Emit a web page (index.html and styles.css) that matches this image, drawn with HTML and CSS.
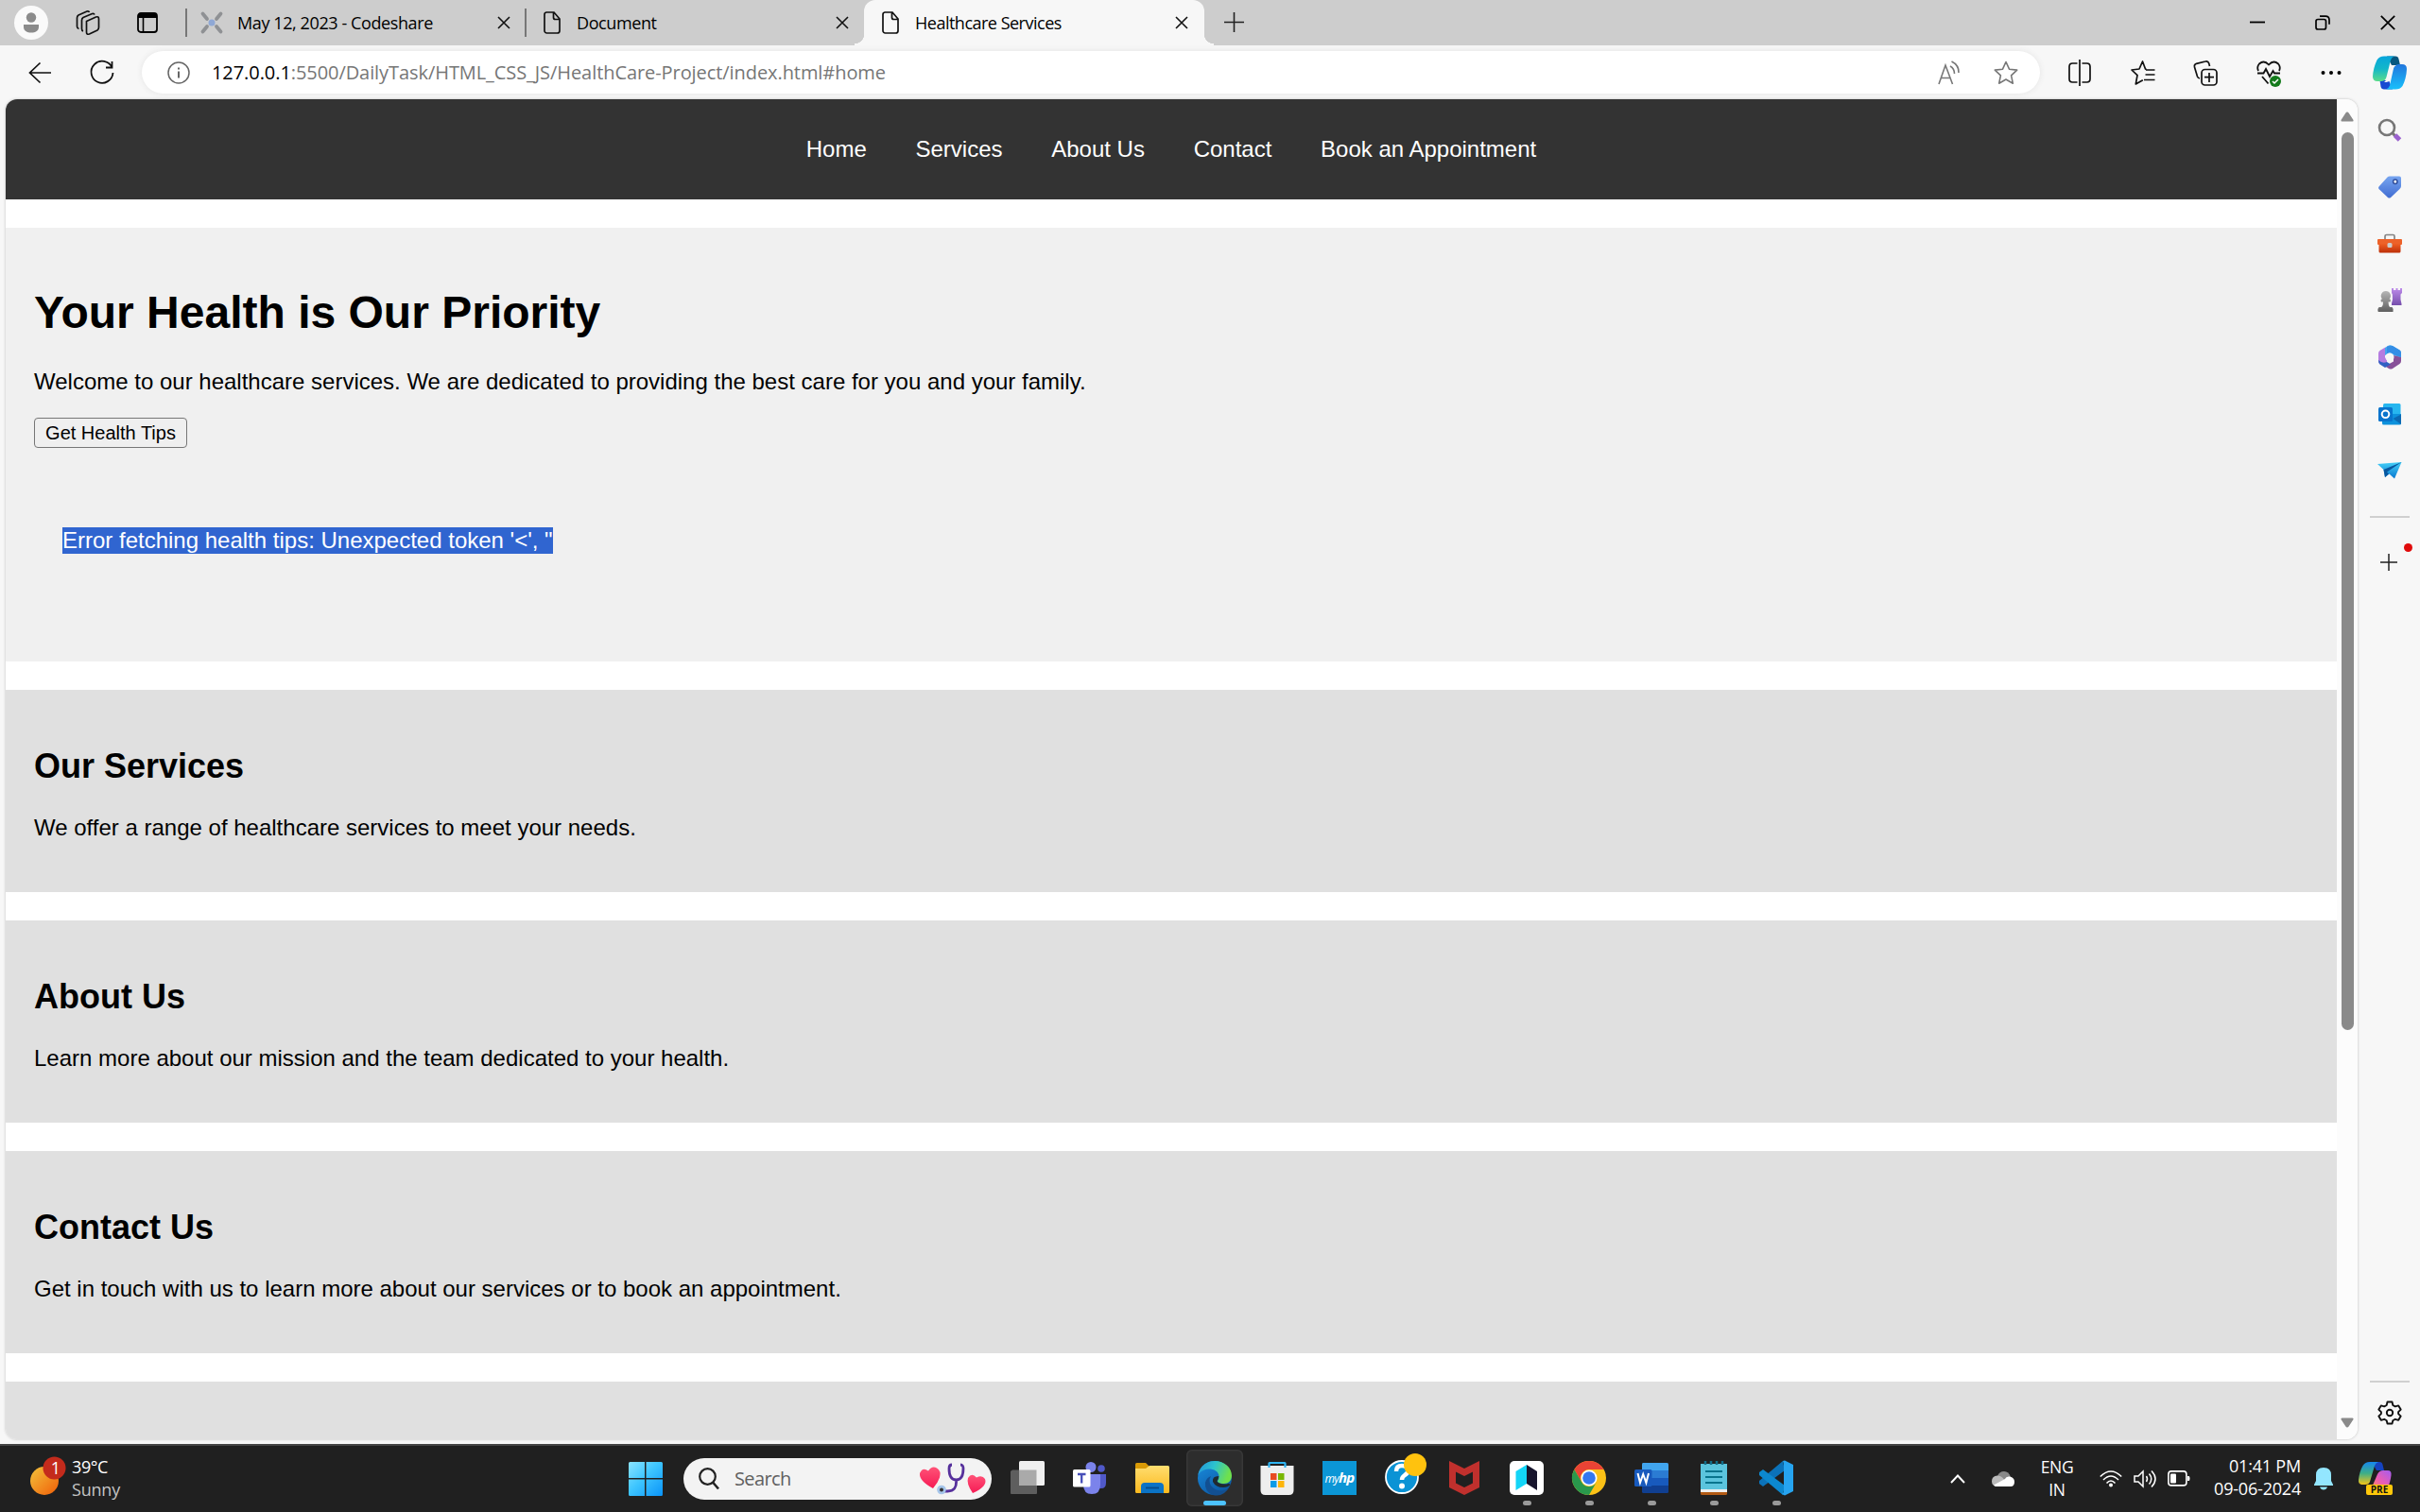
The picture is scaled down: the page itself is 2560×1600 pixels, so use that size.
FILE: index.html
```html
<!DOCTYPE html>
<html lang="en">
<head>
<meta charset="utf-8">
<title>Healthcare Services</title>
<link rel="stylesheet" href="styles.css">
</head>
<body>
<svg class="defs" width="0" height="0">
  <defs>
    <symbol id="doc" viewBox="0 0 18 24"><path d="M3 1h8l6 7v12.500a2.500 2.500 0 0 1-2.500 2.500h-11a2.500 2.500 0 0 1-2.500-2.500v-17a2.500 2.500 0 0 1 2-2.500zM10.500 1v5.500a2 2 0 0 0 2 2H17" fill="none" stroke="#111" stroke-width="1.700"/></symbol>
    <symbol id="x" viewBox="0 0 14 14"><path d="M1 1l12 12M13 1L1 13" fill="none" stroke="#111" stroke-width="1.600"/></symbol>
    <linearGradient id="gWin" x1="0" y1="0" x2="1" y2="1"><stop offset="0" stop-color="#8be3ff"/><stop offset=".45" stop-color="#3fc6ff"/><stop offset="1" stop-color="#0a94f8"/></linearGradient>
    <linearGradient id="gSun" x1="0" y1="0" x2="1" y2="1"><stop offset="0" stop-color="#f3c33c"/><stop offset="1" stop-color="#f05e08"/></linearGradient>
    <linearGradient id="gCopA" x1="0" y1="0" x2="0" y2="1"><stop offset="0" stop-color="#08a5dc"/><stop offset=".5" stop-color="#13b7c9"/><stop offset="1" stop-color="#5bdc8a"/></linearGradient>
    <linearGradient id="gCopB" x1="0" y1="0" x2="0" y2="1"><stop offset="0" stop-color="#2176dd"/><stop offset="1" stop-color="#18c0fb"/></linearGradient>
    <linearGradient id="gPreA" x1="0" y1="0" x2="0" y2="1"><stop offset="0" stop-color="#1687ee"/><stop offset=".5" stop-color="#3dae87"/><stop offset="1" stop-color="#f5c518"/></linearGradient>
    <linearGradient id="gPreB" x1="1" y1="0" x2="0" y2="1"><stop offset="0" stop-color="#a45cf0"/><stop offset=".6" stop-color="#ee5db0"/><stop offset="1" stop-color="#f98c5c"/></linearGradient>
    <linearGradient id="gTag" x1="0" y1="0" x2="0" y2="1"><stop offset="0" stop-color="#77a5f0"/><stop offset="1" stop-color="#416dd2"/></linearGradient>
    <linearGradient id="gBox" x1="0" y1="0" x2="0" y2="1"><stop offset="0" stop-color="#ef5f24"/><stop offset="1" stop-color="#bd2f08"/></linearGradient>
    <linearGradient id="gPurple" x1="0" y1="0" x2="0" y2="1"><stop offset="0" stop-color="#bd8bea"/><stop offset="1" stop-color="#764fac"/></linearGradient>
    <linearGradient id="gGrey" x1="0" y1="0" x2="0" y2="1"><stop offset="0" stop-color="#b6b6b6"/><stop offset="1" stop-color="#5f5f5f"/></linearGradient>
    <linearGradient id="gPlane" x1="0" y1="0" x2="0" y2="1"><stop offset="0" stop-color="#45d0f8"/><stop offset="1" stop-color="#0877cf"/></linearGradient>
    <linearGradient id="gFold" x1="0" y1="0" x2="0" y2="1"><stop offset="0" stop-color="#ffde70"/><stop offset="1" stop-color="#fbb91e"/></linearGradient>
    <linearGradient id="gEdge" x1="0" y1="0" x2="1" y2=".3"><stop offset="0" stop-color="#2390d8"/><stop offset=".5" stop-color="#2cc3cf"/><stop offset="1" stop-color="#6fe04c"/></linearGradient>
    <linearGradient id="gEdgeB" x1="0" y1="0" x2=".6" y2="1"><stop offset="0" stop-color="#1a8ee0"/><stop offset="1" stop-color="#0c59a4"/></linearGradient>
    <linearGradient id="gHeart" x1="0" y1="0" x2="0" y2="1"><stop offset="0" stop-color="#ff5277"/><stop offset="1" stop-color="#f61b55"/></linearGradient>
  </defs>
</svg>

<div class="screen">
  <header class="tabbar">
    <div class="tools">
      <svg class="avatar" viewBox="0 0 36 36"><circle cx="18" cy="18" r="18" fill="#fafafa"/><circle cx="18" cy="12.500" r="5.200" fill="#8b8b8b"/><path d="M10 20h16v2.500c0 4-3.500 6-8 6s-8-2-8-6z" fill="#8b8b8b"/></svg>
      <svg class="spaces" viewBox="0 0 26 26" fill="none" stroke="#111" stroke-width="1.700" stroke-linejoin="round"><path d="M11.500 11.500l10-4.500q3-1 3 2v9q0 2-1.500 3l-8.500 4q-3 1-3-2z"/><path d="M8 22q-1.500-.5-1.500-2.500V10.500q0-2 1.500-3l9.500-4q2-.5 2.500 1"/><path d="M3.500 19.500Q1.500 19 1.500 17V8q0-2 1.500-3l9-4q2-.5 2.500 1"/></svg>
      <svg class="panes" viewBox="0 0 22 22"><rect x="1" y="1" width="20" height="20" rx="3" fill="none" stroke="#000" stroke-width="1.800"/><path d="M1 6V4q0-3 3-3h14q3 0 3 3v2z" fill="#000"/><path d="M6.500 6v15" stroke="#000" stroke-width="1.600"/></svg>
    </div>
    <div class="tab first">
      <svg class="fav" viewBox="0 0 24 24"><path d="M2.500 2.500l4.500 5.500M21.500 2.500l-4.500 5.500M2.500 21.500l4.500-5.500M21.500 21.500l-4.500-5.500" stroke="#8f9194" stroke-width="3.800" stroke-linecap="round"/><circle cx="12" cy="12" r="3.500" fill="#8fa8d5"/></svg>
      <span class="title t1">May 12, 2023 - Codeshare</span><svg class="x"><use href="#x"/></svg>
    </div>
    <div class="tab second"><svg class="doc"><use href="#doc"/></svg><span class="title t2">Document</span><svg class="x"><use href="#x"/></svg></div>
    <div class="tab active"><svg class="doc"><use href="#doc"/></svg><span class="title t3">Healthcare Services</span><svg class="x"><use href="#x"/></svg></div>
    <svg class="plus" viewBox="0 0 21 21"><path d="M10.500 0v21M0 10.500h21" stroke="#222" stroke-width="1.600"/></svg>
    <div class="winctl">
      <svg viewBox="0 0 16 16"><path d="M0 7.500h16" stroke="#000" stroke-width="1.800"/></svg>
      <svg viewBox="0 0 16 16" fill="none" stroke="#000" stroke-width="1.700"><rect x="1" y="4.500" width="10.500" height="10.500" rx="2"/><path d="M5 1.200h6q4 0 4 4v4.500"/></svg>
      <svg viewBox="0 0 16 16"><path d="M.8.800l14.400 14.400M15.200.8L.8 15.200" stroke="#000" stroke-width="1.700"/></svg>
    </div>
  </header>

  <div class="toolbar">
    <svg class="back" viewBox="0 0 24 24" fill="none" stroke="#111" stroke-width="1.700"><path d="M12.500 1.500L1.500 12l11 10.500M1.500 12H24"/></svg>
    <svg class="reload" viewBox="0 0 26 26" fill="none" stroke="#111" stroke-width="1.800"><path d="M23.500 7.500A11.500 11.500 0 1 0 24.500 13M23.500 1v6.500H17"/></svg>
    <div class="address">
      <svg class="info" viewBox="0 0 24 24" fill="none" stroke="#666" stroke-width="1.500"><circle cx="12" cy="12" r="11"/><path d="M12 10.500V17.500M12 6.500v2" stroke-width="2"/></svg>
      <span class="url"><b>127.0.0.1</b>:5500/DailyTask/HTML_CSS_JS/HealthCare-Project/index.html#home</span>
      <svg class="read" viewBox="0 0 24 24" fill="none" stroke="#777" stroke-width="1.600"><path d="M1 24L8 4l7.500 20M3.500 17.500h9.500M13 5q4.500 2.500 4.500 8M14.500 0q8 4 7.500 12"/></svg>
      <svg class="star" viewBox="0 0 26 26"><path d="M13 1.500l3.500 7.700 8.200.900-6.100 5.700 1.700 8.400L13 20l-7.300 4.200 1.700-8.400L1.300 10.100l8.200-.9z" fill="none" stroke="#777" stroke-width="1.600" stroke-linejoin="round"/></svg>
    </div>
    <div class="actions">
      <svg viewBox="0 0 26 28" fill="none" stroke="#111" stroke-width="1.700"><path d="M10.500 4H5.500q-3.500 0-3.500 3.500v13q0 3.500 3.500 3.500h5M15.500 4h5q3.500 0 3.500 3.500v13q0 3.500-3.500 3.500h-5M13 0v28"/></svg>
      <svg viewBox="0 0 26 28" fill="none" stroke="#111" stroke-width="1.700" stroke-linejoin="round"><path d="M16.500 10.500l-1-.5L12.500 2 9 10l-8 1 6 5.700L5.300 26l7.500-4.300M16 11h9.500M15.500 16h10M14 21.500h11.500"/></svg>
      <svg viewBox="0 0 26 28" fill="none" stroke="#111" stroke-width="1.700"><rect x="9" y="10.500" width="16" height="16.500" rx="3.500"/><path d="M17 14v10M12 18.700h10M17.500 7l-.8-3q-.9-2.800-3.700-2L3.500 4.300q-2.700.8-2 3.700l3 10q.5 1.500 2.500 2"/></svg>
      <svg viewBox="0 0 26 28" fill="none" stroke="#111" stroke-width="1.800"><path d="M2 12Q0 8 3 4.500q5-4.500 10 1 5-5.500 10-1Q26 8 24 12M1 14.500h6.500L10 10l4 8 3.500-6 1.500 2.500h6M6 18l6.500 7.500"/><circle cx="20" cy="23" r="6" fill="#137a1b" stroke="none"/><path d="M17 23l2 2 4-4" stroke="#fff" stroke-width="1.500"/></svg>
      <svg viewBox="0 0 26 28"><circle cx="4.500" cy="14" r="2"/><circle cx="13" cy="14" r="2"/><circle cx="21.500" cy="14" r="2"/></svg>
    </div>
    <svg class="copilot" viewBox="0 0 36 36"><path d="M15 .5h9q3 0 3.500 3L29 10h-9z" fill="#07577f"/><path d="M21 35.500h-9q-3 0-3.500-3L7.500 26H17z" fill="#1749d2"/><path d="M12 .5h11q-3 1-4 4l-4.500 18q-1 4-5 4.500H5q-5 0-5-5Q.5 13 4.500 4.500 7 .5 12 .5z" fill="url(#gCopA)"/><path d="M24 35.500H14q3-1 4-4l4-18q1-4 5-4.500h4q5 0 5 5-.5 10-4.500 18-2.500 3.500-7.500 3.500z" fill="url(#gCopB)"/><path d="M19.500 10H25q-3 1-4 5l-3 11q-1 2-6 2 2.500-1.500 3.500-5z" fill="#f7f7f7"/></svg>
  </div>

  <div class="middle">
    <div class="frame">
      <main class="page">
        <nav><a>Home</a><a>Services</a><a>About Us</a><a>Contact</a><a>Book an Appointment</a></nav>
        <section class="hero">
          <h1>Your Health is Our Priority</h1>
          <p>Welcome to our healthcare services. We are dedicated to providing the best care for you and your family.</p>
          <button>Get Health Tips</button>
          <div class="tips"><p><mark>Error fetching health tips: Unexpected token '&lt;', "</mark></p></div>
        </section>
        <section><h2>Our Services</h2><p>We offer a range of healthcare services to meet your needs.</p></section>
        <section><h2>About Us</h2><p>Learn more about our mission and the team dedicated to your health.</p></section>
        <section><h2>Contact Us</h2><p>Get in touch with us to learn more about our services or to book an appointment.</p></section>
        <section></section>
      </main>
      <div class="scroll">
        <svg viewBox="0 0 14 11"><path d="M7 .5q1 0 1.600 1L13.500 9q.5 1.500-1 1.500h-11Q0 10.500.5 9l4.900-7.500Q6 .5 7 .5z" fill="#8a8a8a"/></svg>
        <div class="thumb"></div>
        <svg class="down" viewBox="0 0 14 11"><path d="M7 .5q1 0 1.600 1L13.500 9q.5 1.500-1 1.500h-11Q0 10.500.5 9l4.900-7.500Q6 .5 7 .5z" fill="#8a8a8a"/></svg>
      </div>
    </div>
    <aside class="side">
      <svg viewBox="0 0 26 26"><circle cx="10" cy="10" r="8" fill="none" stroke="#777" stroke-width="2.600"/><path d="M15.500 15.500l3 3" stroke="#777" stroke-width="3"/><path d="M18.500 18l5 5" stroke="#9b62cf" stroke-width="5"/></svg>
      <svg viewBox="0 0 26 26"><path d="M13 1.500h10q2 0 2 2V12q0 1.500-1.500 3L14 24q-1.500 1-3 0L1.500 15q-1-1.500 0-2.500l9-10q1-1 2.500-1z" fill="url(#gTag)"/><circle cx="18.800" cy="7.300" r="2.200" fill="#fff" stroke="#304f9d" stroke-width="1.500"/></svg>
      <svg viewBox="0 0 26 26"><path d="M8 8V5q0-1.500 1.500-1.500h7q1.500 0 1.500 1.500v3" fill="none" stroke="#858585" stroke-width="1.700"/><rect y="8" width="26" height="6" rx="1" fill="#ed6229"/><path d="M1.500 13h23v8q0 1.500-1.500 1.500H3q-1.500 0-1.500-1.500z" fill="url(#gBox)"/><rect x="10.500" y="12" width="5" height="5" rx="1.500" fill="#ccc"/></svg>
      <svg viewBox="0 0 26 26"><path d="M15 0h2v2h2.500V0h2v2H24V0h2v5l-1.500 1.500q-.5 6 1 10V18H15v-2q1.500-4 .8-9.500L15 5z" fill="url(#gPurple)"/><path d="M9 3a5 5 0 0 1 3.500 8.500h1q1 1.500 0 3h-2q0 3.500 1.500 5.500h2.500q2 2 1 5H.8q-1.300-3 1-5h2.500q2-2 1.700-5.500H4q-1-1.500 0-3h1.200A5 5 0 0 1 9 3z" fill="url(#gGrey)"/></svg>
      <svg viewBox="0 0 26 26"><path d="M12 .5q2-.8 4 .4l7.500 4.500q1.500 1 1.500 3v5L17 11l-4-2.500L8 11V3z" fill="#43a6ee"/><path d="M25 13v4q0 2-1.500 3L16 25q-2 1.200-4 0l-4-2.500 9-5V11z" fill="#885099"/><path d="M10 1.500L2.500 6Q1 7 1 9v8q0 2 1.500 3L8 22.500l2-4V16L8 13V3z" fill="#b57ce0"/><path d="M1 16q4 4 9 2l4 2.500L8 24l-5.500-3.500Q1 19 1 16z" fill="#3260c2"/><path d="M10 1.500v8L13 8l9 4 3 1V8q0-1.500-1.500-2.500L16 1z" fill="#348ee6"/><circle cx="13" cy="13" r="4.500" fill="#f7f7f7"/></svg>
      <svg viewBox="0 0 26 26"><rect x="6" y="2" width="18.500" height="15" rx="1.500" fill="#27b6ef"/><path d="M5 13h20v10q0 1.500-1.500 1.500H6.500Q5 24.500 5 23z" fill="#0d91dc"/><path d="M25 13.500L16.500 18l8.500 6z" fill="#0b69b3"/><rect x="1" y="6" width="15" height="15" rx="1.500" fill="#0874cd"/><circle cx="8.500" cy="13.300" r="3.800" fill="none" stroke="#fff" stroke-width="2"/></svg>
      <svg viewBox="0 0 26 26"><path d="M0 6l25.500-2L18 21.500l-5.500-5L8 20l-1.500-8z" fill="url(#gPlane)"/><path d="M25.500 4L6.500 12 8 20l4-3.500-2-2z" fill="#08579f"/></svg>
      <hr>
      <div class="add"><svg viewBox="0 0 18 18"><path d="M9 0v18M0 9h18" stroke="#222" stroke-width="1.500"/></svg><i></i></div>
      <hr class="low">
      <svg class="gear" viewBox="0 0 26 26" fill="none" stroke="#111" stroke-width="1.900" stroke-linejoin="round"><path d="M10.500 1.500h5l.8 3.500 2.500 1.400 3.400-1 2.500 4.200-2.600 2.500v2l2.600 2.500-2.500 4.200-3.400-1-2.500 1.500-.8 3.200h-5l-.8-3.200-2.500-1.500-3.400 1-2.500-4.200 2.600-2.500v-2L1.300 9.600l2.500-4.200 3.400 1L9.700 5z"/><circle cx="13" cy="13" r="3.200"/></svg>
    </aside>
  </div>

  <footer class="taskbar">
    <div class="weather">
      <svg viewBox="0 0 40 44"><circle cx="15" cy="27" r="15" fill="url(#gSun)"/><circle cx="25.500" cy="13.500" r="12" fill="#c42b1c"/><text x="27" y="20" text-anchor="middle" font-size="18" fill="#fff">1</text></svg>
      <div><span>39°C</span><em>Sunny</em></div>
    </div>
    <svg class="start" viewBox="0 0 36 36"><path d="M1.500 0H17v17H0V1.500Q0 0 1.500 0zM18.500 0H34.500Q36 0 36 1.500V17H18.500zM0 18.500h17V36H1.500Q0 36 0 34.500zM18.500 18.500H36v16q0 1.500-1.500 1.500h-16z" fill="url(#gWin)"/></svg>
    <div class="search">
      <svg class="mag" viewBox="0 0 22 24"><circle cx="9.500" cy="9.500" r="8.300" fill="none" stroke="#222" stroke-width="2.200"/><path d="M15 15.500l6 7" stroke="#222" stroke-width="2.600"/></svg>
      <span>Search</span>
      <svg class="med" viewBox="0 0 72 34"><path d="M15 27Q0 19 1 11q3-7 9-2.500 4-6 9-3 5 3 3 10-2 6-7 11.500z" fill="url(#gHeart)"/><path d="M57 32Q50 22 52 16q4-6 9-.5 6-3 9 1.500 3 8-13 15z" fill="url(#gHeart)"/><path d="M35 2q-3 0-3 4 0 12 7.500 12T47 6q0-4-3-4M39.500 18q1 12-9 12h-6" fill="none" stroke="#56309c" stroke-width="2.800"/><circle cx="24" cy="28.500" r="4.800" fill="#a5c5ea"/><circle cx="24" cy="28.500" r="2" fill="#333"/></svg>
    </div>
    <div class="apps">
      <div class="app"><svg viewBox="0 0 36 36"><path d="M2 9.500h26V34q0 1-1 1H1q-1 0-1-1V11z" fill="#5e5e5e"/><rect x="9" width="27" height="26" rx="1.500" fill="#f0f0f0"/><path d="M9 9.500h18.500V26H10.500Q9 26 9 24.500z" fill="#aaa"/></svg></div>
      <div class="app"><svg viewBox="0 0 36 36"><circle cx="19" cy="6.500" r="5.500" fill="#7b83eb"/><circle cx="30" cy="8" r="3.800" fill="#5059c9"/><path d="M24 14h11v9q0 6-5 6-6 0-6-6z" fill="#5059c9"/><path d="M11 14h18v11q0 10-9 10t-9-10z" fill="#7b83eb"/><rect y="9" width="18.500" height="18.500" rx="1.500" fill="#fff"/><path d="M5 14h8.500M9.200 14v9.500" stroke="#464eb8" stroke-width="2.300"/></svg></div>
      <div class="app"><svg viewBox="0 0 36 36"><path d="M0 3.500Q0 2 1.500 2H11l4 4-2 4H0z" fill="#d99a06"/><path d="M0 8h11l4-3h19.500Q36 5 36 6.500v26q0 1.500-1.500 1.500h-33Q0 34 0 32.500z" fill="url(#gFold)"/><path d="M6 34v-7q0-4 4-4h16q4 0 4 4v7z" fill="#0b73c5"/><path d="M11 28.500h14" stroke="#064b8a" stroke-width="1.800"/></svg></div>
      <div class="app on"><svg viewBox="0 0 36 36"><circle cx="18" cy="18" r="18" fill="url(#gEdgeB)"/><path d="M.3 15C2 6 9 0 18 0c10 0 18 7 18 15.500 0 5-3.500 8.500-8.500 8.500-4 0-6.500-1.500-6.500-2.500s1.500-2 1.500-5C22.500 11 17 8.500 12 8.500 6 8.500 2 12 .3 15z" fill="url(#gEdge)"/><path d="M14 16q-3 5 0 10 5 7 14 5 4-1 6-4-7 12-18 9Q7 32 8 23q1-5 6-7z" fill="#124f91"/><path d="M22.300 16q-.3 3-1.500 4.500-1 1.500 2 3 5 2 10 .2l2 1.300Q32 28 27 28q-8 0-11-6-1-6 6.300-6z" fill="#202a30"/></svg></div>
      <div class="app"><svg viewBox="0 0 36 36"><path d="M.5 5h35v26q0 5-5 5h-25q-5 0-5-5z" fill="#eee"/><path d="M9.500 7V2.500Q9.500 2 10 2h16q.5 0 .5.500V7" fill="none" stroke="#30b5f2" stroke-width="2.200"/><path fill="#e84a21" d="M11 13h6.500v7H11z"/><path fill="#78b700" d="M19 13h6.500v7H19z"/><path fill="#0a9be8" d="M11 21h6.500v7H11z"/><path fill="#fdb509" d="M19 21h6.500v7H19z"/></svg></div>
      <div class="app"><div class="hp">my<b>hp</b></div></div>
      <div class="app"><svg class="help" viewBox="0 0 48 48"><circle cx="20" cy="28" r="17" fill="#0b93d5" stroke="#fff" stroke-width="1.800"/><path d="M14 22q0-6 6-6 6.500 0 6.500 5 0 3-3.500 5-3 2-3 5" fill="none" stroke="#fff" stroke-width="4.500"/><circle cx="20" cy="37.500" r="3" fill="#fff"/><circle cx="34" cy="15" r="12" fill="#ffc20e"/></svg></div>
      <div class="app"><svg viewBox="0 0 36 36"><path d="M2 0l16 8L34 0v28l-16 8-16-8zM9 11.500v12L18 28l9-4.500v-12L18 16z" fill="#c0302d" fill-rule="evenodd"/></svg></div>
      <div class="app run"><svg viewBox="0 0 36 36"><rect width="36" height="36" rx="5" fill="#fff"/><path d="M6.500 11L18 4v20L6.500 31z" fill="#13d5f7"/><path d="M18 4l11 7v20l-11-7z" fill="#17152d"/></svg></div>
      <div class="app run"><svg viewBox="0 0 36 36"><circle cx="18" cy="18" r="18" fill="#fbc116"/><path d="M2.400 9a18 18 0 0 1 31.200 0H18a9 9 0 0 0-7.800 13.500z" fill="#ea4335"/><path d="M2.400 9A18 18 0 0 0 18 36l7.800-13.500a9 9 0 0 1-15.600 0z" fill="#29984c"/><circle cx="18" cy="18" r="8.500" fill="#fff"/><circle cx="18" cy="18" r="6.800" fill="#3478ee"/></svg></div>
      <div class="app run"><svg viewBox="0 0 36 36"><path d="M9 2h25.500Q36 2 36 3.500V10H8V3.500Q8 2 9 2z" fill="#41a5ee"/><path d="M8 10h28v8H8z" fill="#2b7cd3"/><path d="M8 18h28v8H8z" fill="#185abd"/><path d="M8 26h28v6.500q0 1.500-1.500 1.500h-25Q8 34 8 32.500z" fill="#103f91"/><rect y="9" width="18.500" height="18" rx="1.500" fill="#185abd"/><path d="M3.500 13l2.500 10 3.200-9 3.200 9L15 13" fill="none" stroke="#fff" stroke-width="2"/></svg></div>
      <div class="app run"><svg viewBox="0 0 36 36"><path d="M4 3h28v27H4z" fill="#5bc4dd"/><path d="M4 30h28v3H4z" fill="#eee"/><path d="M4 33h28v1.500q0 1.500-1.500 1.500h-25Q4 36 4 34.500z" fill="#b25a14"/><path d="M9 11h18M9 17h18M9 23h18" stroke="#07748d" stroke-width="2"/><path d="M9 0v4M15 0v4M21 0v4M27 0v4" stroke="#136d89" stroke-width="2.500"/></svg></div>
      <div class="app run"><svg viewBox="0 0 36 36"><path d="M25 0l2 10L4 27l-4-3v-3z" fill="#0b72b9"/><path d="M0 12l4-3 23 17-2 10L0 15z" fill="#0c88cf"/><path d="M25 0l2-.5L36 4v28l-9 4.500-3-1.500 2-2V3z" fill="#26a4f0"/></svg></div>
    </div>
    <div class="tray">
      <svg class="chev" viewBox="0 0 16 10"><path d="M1 9l7-7.500L15 9" fill="none" stroke="#fff" stroke-width="1.900"/></svg>
      <svg class="cloud" viewBox="0 0 24 16"><path d="M6 5q2-5 7-5 5 0 7 6l-8 4z" fill="#888"/><path d="M5 16q-5-1-5-5.500Q0 5 6 4.500q4 0 7 4l6 5z" fill="#bbb"/><path d="M2 14.500L14 8q1-3 5-2.500 5 1 5 5.500 0 5-4 5H5q-2 0-3-1.500z" fill="#fff"/></svg>
      <div class="lang">ENG<br>IN</div>
      <svg class="wifi" viewBox="0 0 24 18" fill="none" stroke="#fff" stroke-width="1.600"><path d="M.8 6.500q11.200-11 22.400 0M4 10q8-8 16 0M7.500 13.500q4.500-5 9 0"/><circle cx="12" cy="15.500" r="2" fill="#fff" stroke="none"/></svg>
      <svg class="vol" viewBox="0 0 25 20" fill="none" stroke="#fff" stroke-width="1.500"><path d="M1 7h4l5-5v16l-5-5H1zM13.500 7q2 3 0 6M16.500 4.500q4.500 5.500 0 11M19 1.500q8 8.500 0 17"/></svg>
      <svg class="bat" viewBox="0 0 24 17"><rect x=".9" y=".9" width="19" height="15" rx="3" fill="none" stroke="#fff" stroke-width="1.600"/><rect x="3" y="3.500" width="6" height="10" rx="1" fill="#fff"/><path d="M21 6h1.500q1 0 1 2.500t-1 2.500H21z" fill="#fff"/></svg>
      <div class="clock">01:41 PM<br>09-06-2024</div>
      <svg class="bell" viewBox="0 0 20 24"><path d="M10 0q8 0 8 8v6l2 4v1H0v-1l2-4V8q0-8 8-8zM6 20.500h8q-1 3-4 3t-4-3z" fill="#93e6ff"/></svg>
      <div class="pre"><svg viewBox="0 0 36 36"><path d="M14 0h8q3 0 3.500 3L27 9h-8z" fill="#1543c0"/><path d="M12 0h9q-3 1-4 4l-5 17q-1 3-5 3H3q-3.500-1-3-5Q1 10 4.500 4 7 0 12 0z" fill="url(#gPreA)"/><path d="M14 27l6-14q2-4 6-4h5q4 0 3.500 5-1 8-3.500 13z" fill="url(#gPreB)"/></svg><b>PRE</b></div>
    </div>
  </footer>
</div>
</body>
</html>
```
FILE: styles.css
```css
* { box-sizing: border-box; }
body { margin: 0; background: #f7f7f7; color: #000; font-family: "Liberation Sans", Arial, sans-serif; }
svg { display: block; flex: none; overflow: visible; }
.defs { position: absolute; }
.screen { width: 2560px; height: 1600px; display: flex; flex-direction: column; overflow: hidden; }
.tabbar, .toolbar, .taskbar { flex: none; display: flex; align-items: center; font-family: "Open Sans", "Noto Sans", sans-serif; white-space: nowrap; }

/* tab strip */
.tabbar { height: 48px; background: #cdcdcd; }
.tools { display: flex; align-items: center; width: 196px; padding-left: 15px; }
.avatar { width: 36px; height: 36px; }
.spaces { width: 26px; height: 26px; margin-left: 29px; }
.panes { width: 22px; height: 22px; margin-left: 39px; }
.tab { display: flex; align-items: center; height: 48px; font-size: 18px; }
.title { margin-top: -1px; }
.first { width: 359px; padding: 0 15px 0 14px; border-left: 2px solid #777; height: 30px; }
.second { width: 359px; padding: 0 16px 0 18px; border-left: 2px solid #777; height: 30px; }
.active { position: relative; width: 360px; padding: 0 17px 0 19px; background: #f7f7f7; border-radius: 12px 12px 0 0; }
.active::before, .active::after { content: ""; position: absolute; bottom: 0; width: 10px; height: 12px; }
.active::before { left: -10px; background: radial-gradient(circle at 0 0, #cdcdcd 10px, #f7f7f7 10.500px); }
.active::after { right: -10px; background: radial-gradient(circle at 100% 0, #cdcdcd 10px, #f7f7f7 10.500px); }
.fav { width: 24px; height: 24px; margin-right: 15px; }
.doc { width: 18px; height: 24px; margin-right: 17px; }
.x { width: 14px; height: 14px; margin-left: auto; }
.t1 { letter-spacing: -.4px; }
.t2 { letter-spacing: -.4px; }
.t3 { letter-spacing: -.5px; }
.plus { width: 21px; height: 21px; margin: -1px 0 0 21px; }
.winctl { display: flex; gap: 53px; margin: -1px 0 0 auto; padding-right: 26px; }
.winctl svg { width: 16px; height: 16px; }

/* address row */
.toolbar { height: 57px; background: #f7f7f7; }
.back { width: 24px; height: 24px; margin-left: 30px; }
.reload { width: 26px; height: 26px; margin-left: 41px; }
.address { display: flex; align-items: center; width: 2008px; height: 45px; margin-left: 29px; padding: 0 23px 0 27px; border-radius: 23px; background: #fff; box-shadow: 0 0 6px #e4e4e4; }
.info { width: 24px; height: 24px; margin-right: 23px; }
.url { color: #767676; font-size: 20px; letter-spacing: -.07px; }
.url b { color: #000; font-weight: 400; }
.read { width: 24px; height: 24px; margin-left: auto; }
.star { width: 26px; height: 26px; margin-left: 35px; }
.actions { display: flex; gap: 40.500px; margin-left: 29px; }
.actions svg { width: 26px; height: 28px; }
.copilot { width: 36px; height: 36px; margin-left: 31px; }

/* browser viewport */
.middle { flex: 1; min-height: 0; display: flex; background: #f7f7f7; }
.frame { display: flex; width: 2488px; height: 1418px; margin-left: 6px; border-radius: 12px; overflow: hidden; background: #fff; box-shadow: 0 0 3px #bbb; }
.page { width: 2466px; height: 1418px; overflow: hidden; }
.page nav { display: flex; justify-content: center; align-items: center; gap: 51.700px; height: 106px; background: #333; color: #fff; font-size: 24px; }
.page section { height: 214px; margin-top: 30px; padding: 30px; background: #e0e0e0; display: flow-root; }
.page .hero { height: 459px; background: #f0f0f0; }
h1 { margin: 32px 0; font-size: 48px; line-height: 55px; }
h2 { margin: 30px 0; font-size: 36px; line-height: 42px; }
.page p { margin: 0 0 24px; font-size: 24px; line-height: 28px; }
button { display: block; width: 162px; height: 32px; padding: 0; border: 1.500px solid #767676; border-radius: 4px; background: #efefef; color: #000; font: 20px "Liberation Sans", Arial, sans-serif; }
.tips { margin-top: 30px; padding: 54px 30px; }
mark { display: inline-block; background: #3065d0; color: #fff; height: 28px; vertical-align: top; }
.scroll { display: flex; flex-direction: column; align-items: center; width: 22px; padding: 13px 0 12px; background: #fcfcfc; }
.scroll svg { width: 14px; height: 11px; }
.thumb { width: 13px; height: 950px; margin-top: 11px; border-radius: 7px; background: #8a8a8a; }
.scroll .down { margin-top: auto; transform: rotate(180deg); }

/* sidebar */
.side { display: flex; flex-direction: column; align-items: center; width: 64px; margin-left: 2px; padding-top: 20px; }
.side > svg { width: 26px; height: 26px; margin-bottom: 34px; }
.side hr { width: 42px; height: 2px; margin: 1px 0 0; border: 0; background: #d0d0d0; flex: none; }
.add { position: relative; margin: 38px 2px 0 0; }
.add svg { width: 18px; height: 18px; }
.add i { position: absolute; left: 25px; top: -11px; width: 9px; height: 9px; border-radius: 50%; background: #e00b0b; }
.side .low { margin-top: auto; }
.side .gear { margin: 19px 0 20px; }

/* taskbar */
.taskbar { height: 72px; background: #202020; border-top: 2px solid #444; color: #fff; font-size: 18px; line-height: 24px; }
.weather { display: flex; align-items: center; width: 665px; margin-top: -2px; padding-left: 32px; }
.weather svg { width: 40px; height: 44px; margin: -5px 4px 0 0; }
.weather span, .weather em { display: block; font-style: normal; letter-spacing: -.4px; }
.weather em { color: #c4c4c4; letter-spacing: -.2px; }
.start { width: 36px; height: 36px; margin-top: -1px; }
.search { display: flex; align-items: center; width: 326px; height: 44px; margin: -1px 0 0 22px; padding: 0 5px 0 16px; border-radius: 22px; background: #f3f3f3; color: #606060; font-size: 20px; }
.search span { margin-left: 16px; letter-spacing: -.6px; }
.mag { width: 22px; height: 24px; }
.med { width: 72px; height: 34px; margin-left: auto; }
.apps { display: flex; gap: 6px; margin-left: 8px; }
.app { position: relative; display: flex; justify-content: center; width: 60px; height: 60px; padding-top: 12px; border-radius: 6px; margin-top: -2px; }
.app svg { width: 36px; height: 36px; }
.app .help { width: 48px; height: 48px; margin: -11px 0 0 8px; }
.app.on { background: #2d2d2d; box-shadow: inset 0 0 0 1.500px #383838; }
.app.on::after, .run::after { content: ""; position: absolute; bottom: 1px; left: 18px; width: 24px; height: 5px; border-radius: 3px; background: #4cc2ff; }
.run::after { left: 26px; width: 9px; background: #9a9a9a; }
.hp { width: 36px; height: 36px; background: #0b96d6; text-align: center; font: italic 12px/35px "Open Sans", sans-serif; letter-spacing: -.8px; }
.hp b { font-size: 15px; }
.tray { display: flex; align-items: center; margin: -1px 0 0 auto; padding-right: 29px; }
.chev { width: 16px; height: 10px; }
.cloud { width: 24px; height: 16px; margin-left: 28px; }
.lang { width: 40px; margin: -2px 0 0 25px; text-align: center; font-size: 17.500px; letter-spacing: -.3px; }
.wifi { width: 24px; height: 18px; margin-left: 25px; }
.vol { width: 25px; height: 20px; margin-left: 12px; }
.bat { width: 24px; height: 17px; margin-left: 11px; }
.clock { width: 117px; margin-top: -3px; text-align: right; letter-spacing: -.2px; }
.bell { width: 20px; height: 24px; margin-left: 14px; }
.pre { position: relative; margin-left: 27px; }
.pre svg { width: 36px; height: 36px; }
.pre b { position: absolute; left: 8px; top: 24px; width: 28px; height: 11px; border-radius: 2px; background: #ffc80a; color: #111; font-size: 10px; line-height: 11px; text-align: center; }
```
